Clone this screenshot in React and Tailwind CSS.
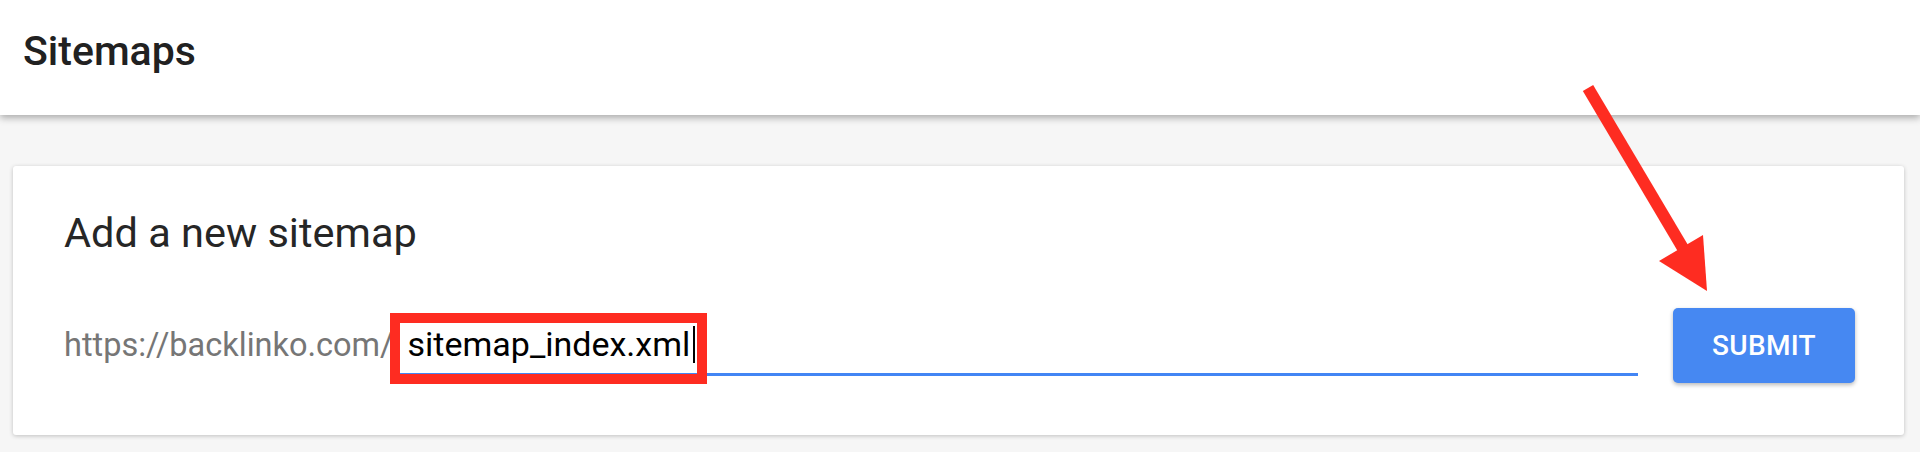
import React from "react";

export default function App() {
  return (
    <div
      className="relative w-full h-[452px] overflow-hidden bg-[#f6f6f6]"
      style={{ fontFamily: "Roboto, 'Liberation Sans', sans-serif" }}
    >
      {/* Header */}
      <div className="relative z-10 h-[115px] bg-white px-[23px] pt-[30px] shadow-[0_3px_7px_rgba(0,0,0,0.3)]">
        <h1 className="text-[41px] leading-[42px] font-medium text-[#212121]">
          Sitemaps
        </h1>
      </div>

      {/* Card */}
      <div className="mt-[51px] ml-[13px] mr-[16px] h-[269px] rounded-[3px] bg-white pl-[51px] pr-[49px] pt-[46px] shadow-[0_1px_4px_rgba(0,0,0,0.22)]">
        <h2 className="text-[41.5px] leading-[42px] text-[#262626]">
          Add a new sitemap
        </h2>

        <div className="mt-[54px] flex items-center h-[75px]">
          <span className="text-[32.5px] leading-none text-[#767676] whitespace-nowrap">
            https://backlinko.com/
          </span>

          <div className="relative flex-1 h-[60px] flex items-center pl-[14px] border-b-[3px] border-[#4285f4]">
            <span className="text-[34px] leading-none text-black whitespace-nowrap">
              sitemap_index.xml
            </span>
            <span className="inline-block w-[2px] h-[37px] bg-black ml-[3px]" />

            {/* annotation box */}
            <div className="pointer-events-none absolute left-[-4px] top-[-3px] w-[317px] h-[71px] border-[10px] border-[#fe2c21]" />
          </div>

          <button className="ml-[35px] w-[182px] h-[75px] rounded-[5px] bg-[#4688f2] text-white text-[28px] font-medium tracking-[0.3px] shadow-[0_2px_4px_rgba(0,0,0,0.28)]">
            SUBMIT
          </button>
        </div>
      </div>

      {/* annotation arrow */}
      <svg
        className="pointer-events-none absolute inset-0 z-20"
        width="1920"
        height="452"
        viewBox="0 0 1920 452"
      >
        <line
          x1="1588"
          y1="88"
          x2="1684"
          y2="250"
          stroke="#fe2c21"
          strokeWidth="12"
        />
        <polygon points="1659,261 1703,235 1707,291" fill="#fe2c21" />
      </svg>
    </div>
  );
}
